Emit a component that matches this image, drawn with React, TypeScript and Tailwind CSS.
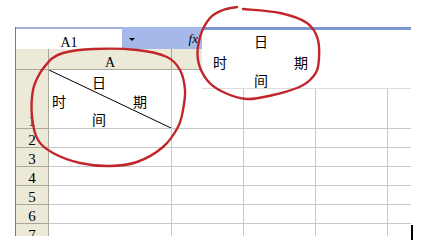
import React from 'react';

type Pt = [number, number];

// hand-drawn red marks, smoothed with catmull-rom
const LEFT_MARK: Pt[] = [
  [50, 60], [63, 53], [93, 49], [137, 50], [167, 57], [180, 70], [185, 90], [183, 110],
  [178, 127], [163, 147], [137, 162], [110, 166], [80, 163], [53, 153], [38, 140],
  [32, 117], [33, 90], [40, 73], [51, 59],
];

const RIGHT_MARK: Pt[] = [
  [243, 9], [280, 13], [307, 23], [318, 40], [318, 67], [310, 80], [297, 88], [273, 95],
  [247, 99], [223, 92], [207, 80], [198, 60], [200, 37], [210, 18], [223, 10], [237, 7],
];

function curve(p: Pt[]) {
  let d = `M${p[0][0]},${p[0][1]}`;
  for (let i = 0; i < p.length - 1; i++) {
    const p0 = p[i - 1] ?? p[i];
    const p1 = p[i];
    const p2 = p[i + 1];
    const p3 = p[i + 2] ?? p2;
    const c1 = [p1[0] + (p2[0] - p0[0]) / 6, p1[1] + (p2[1] - p0[1]) / 6];
    const c2 = [p2[0] - (p3[0] - p1[0]) / 6, p2[1] - (p3[1] - p1[1]) / 6];
    d += ` C${c1[0]},${c1[1]} ${c2[0]},${c2[1]} ${p2[0]},${p2[1]}`;
  }
  return d;
}

const cjk = "font-['Noto_Sans_CJK_SC',sans-serif]";

function HeaderRow() {
  return (
    <div className="flex h-[21px]">
      <div className="w-[33px] border-r border-b border-[#aca899] bg-[#ece9d8]" />
      <div className="w-[123px] border-r border-b border-[#aca899] bg-[#ece9d8] flex justify-center pt-[7px] text-[14px] leading-none">A</div>
      <div className="w-[72px] border-r border-b border-[#aca899] bg-[#ece9d8]" />
      <div className="w-[72px] border-r border-b border-[#aca899] bg-[#ece9d8]" />
      <div className="w-[72px] border-r border-b border-[#aca899] bg-[#ece9d8]" />
      <div className="flex-1 border-b border-[#aca899] bg-[#ece9d8]" />
    </div>
  );
}

function Row({ n, h, children }: { n: number; h: string; children?: React.ReactNode }) {
  return (
    <div className={`flex ${h}`}>
      <div className="w-[33px] border-r border-b border-[#aca899] bg-[#ece9d8] flex items-end justify-center text-[15px] leading-[13px]">
        {n}
      </div>
      <div className="relative w-[123px] border-r border-b border-[#c8c8c8]">{children}</div>
      <div className="w-[72px] border-r border-b border-[#c8c8c8]" />
      <div className="w-[72px] border-r border-b border-[#c8c8c8]" />
      <div className="w-[72px] border-r border-b border-[#c8c8c8]" />
      <div className="flex-1 border-b border-[#c8c8c8]" />
    </div>
  );
}

export default function App() {
  return (
    <div className="relative w-[422px] h-[247px] overflow-hidden bg-white text-black font-['Liberation_Serif','Noto_Sans_CJK_SC',serif]">
      <div className="pl-[15px] pt-[27px]">
        <div className="w-[396px] h-[209px] overflow-hidden border-l border-[#7a7a7a]">
          {/* formula bar */}
          <div className="flex h-[22px]">
            <div className="w-[106px] border-t-2 border-[#9fb2d9] bg-white flex items-end justify-center text-[14px] leading-[13px]">
              A1
            </div>
            <div className="w-[80px] bg-[#a4b9ea] flex items-center justify-between pl-[7px] pr-[4px]">
              <span className="mt-[3px] border-x-[3px] border-t-[3px] border-x-transparent border-t-black" />
              <span className="italic text-[13px] leading-none">fx</span>
            </div>
            <div className="relative flex-1 border-t-[3px] border-[#7b98d2]">
              <div className={`absolute inset-x-0 top-0 z-10 h-[59px] bg-white border-b border-[#dcdcdc] pt-[4px] text-[14px] leading-[14px] ${cjk}`}>
                <div className="pl-[52px]">日</div>
                <div className="mt-[7px] flex w-[106px] justify-between pl-[11px]">
                  <span>时</span>
                  <span>期</span>
                </div>
                <div className="mt-[4px] pl-[52px]">间</div>
              </div>
            </div>
          </div>

          <HeaderRow />
          <Row n={1} h="h-[59px]">
            <svg className="absolute inset-0 h-full w-full" preserveAspectRatio="none" viewBox="0 0 122 58">
              <line x1="0" y1="0" x2="122" y2="58" stroke="#000" strokeWidth="1" />
            </svg>
            <div className={`relative pt-[5px] text-[14px] leading-[14px] ${cjk}`}>
              <div className="pl-[43px]">日</div>
              <div className="mt-[5px] flex w-[98px] justify-between pl-[3px]">
                <span>时</span>
                <span>期</span>
              </div>
              <div className="mt-[4px] pl-[43px]">间</div>
            </div>
          </Row>
          <Row n={2} h="h-[19px]" />
          <Row n={3} h="h-[19px]" />
          <Row n={4} h="h-[19px]" />
          <Row n={5} h="h-[19px]" />
          <Row n={6} h="h-[19px]" />
          <Row n={7} h="h-[19px]" />
        </div>
      </div>

      <div className="absolute left-[411px] top-[225px] h-[15px] w-[2px] bg-black" />

      <svg className="pointer-events-none absolute inset-0 z-20" width="422" height="247">
        <path d={curve(LEFT_MARK)} fill="none" stroke="#c0262c" strokeWidth="2.4" strokeLinecap="round" />
        <path d={curve(RIGHT_MARK)} fill="none" stroke="#c0262c" strokeWidth="2.4" strokeLinecap="round" />
      </svg>
    </div>
  );
}
